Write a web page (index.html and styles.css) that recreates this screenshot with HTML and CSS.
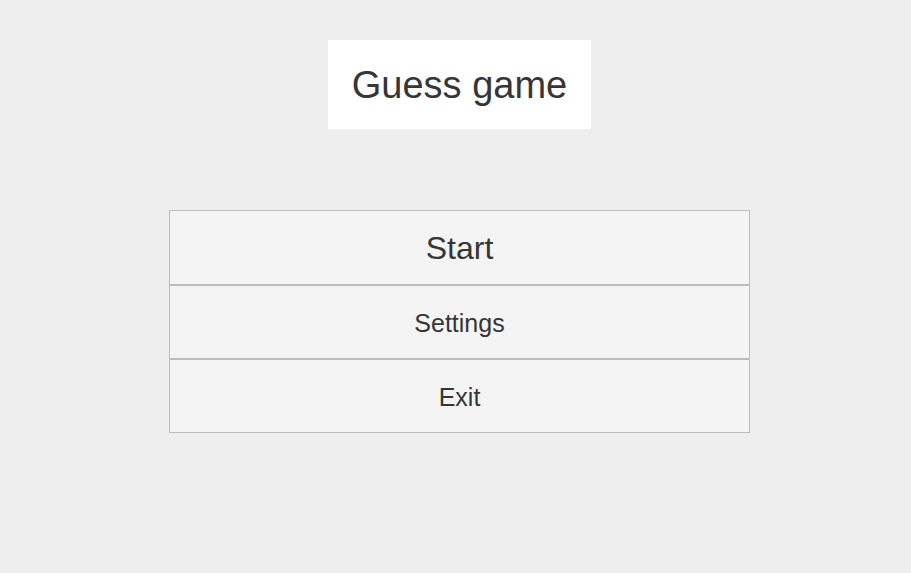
FILE: index.html
```html
<!DOCTYPE html>
<html>
<head>
<meta charset="utf-8">
<link rel="stylesheet" href="styles.css">
</head>
<body>
<div class="page">
  <div class="title">Guess game</div>
  <div class="menu">
    <button class="item start">Start</button>
    <button class="item">Settings</button>
    <button class="item">Exit</button>
  </div>
</div>
</body>
</html>
```
FILE: styles.css
```css
html, body {
  margin: 0;
  padding: 0;
  background: #eeeeee;
  height: 100%;
}
.page {
  display: flex;
  flex-direction: column;
  align-items: center;
  padding-top: 40px;
  padding-left: 8px;
  font-family: "Liberation Sans", Arial, sans-serif;
  color: #363636;
}
.title {
  width: 263px;
  height: 89px;
  background: #ffffff;
  display: flex;
  align-items: center;
  justify-content: center;
  font-size: 38px;
  padding-top: 2px;
  box-sizing: border-box;
}
.menu {
  margin-top: 81px;
  width: 581px;
  display: flex;
  flex-direction: column;
}
.item {
  height: 75px;
  margin: 0;
  border: 1px solid #bdbdbd;
  background: #f4f4f4;
  font-family: "Liberation Sans", Arial, sans-serif;
  font-size: 25px;
  color: #363636;
  padding: 2px 0 0 0;
}
.item + .item {
  height: 74px;
}
.item.start {
  font-size: 32px;
}
```
